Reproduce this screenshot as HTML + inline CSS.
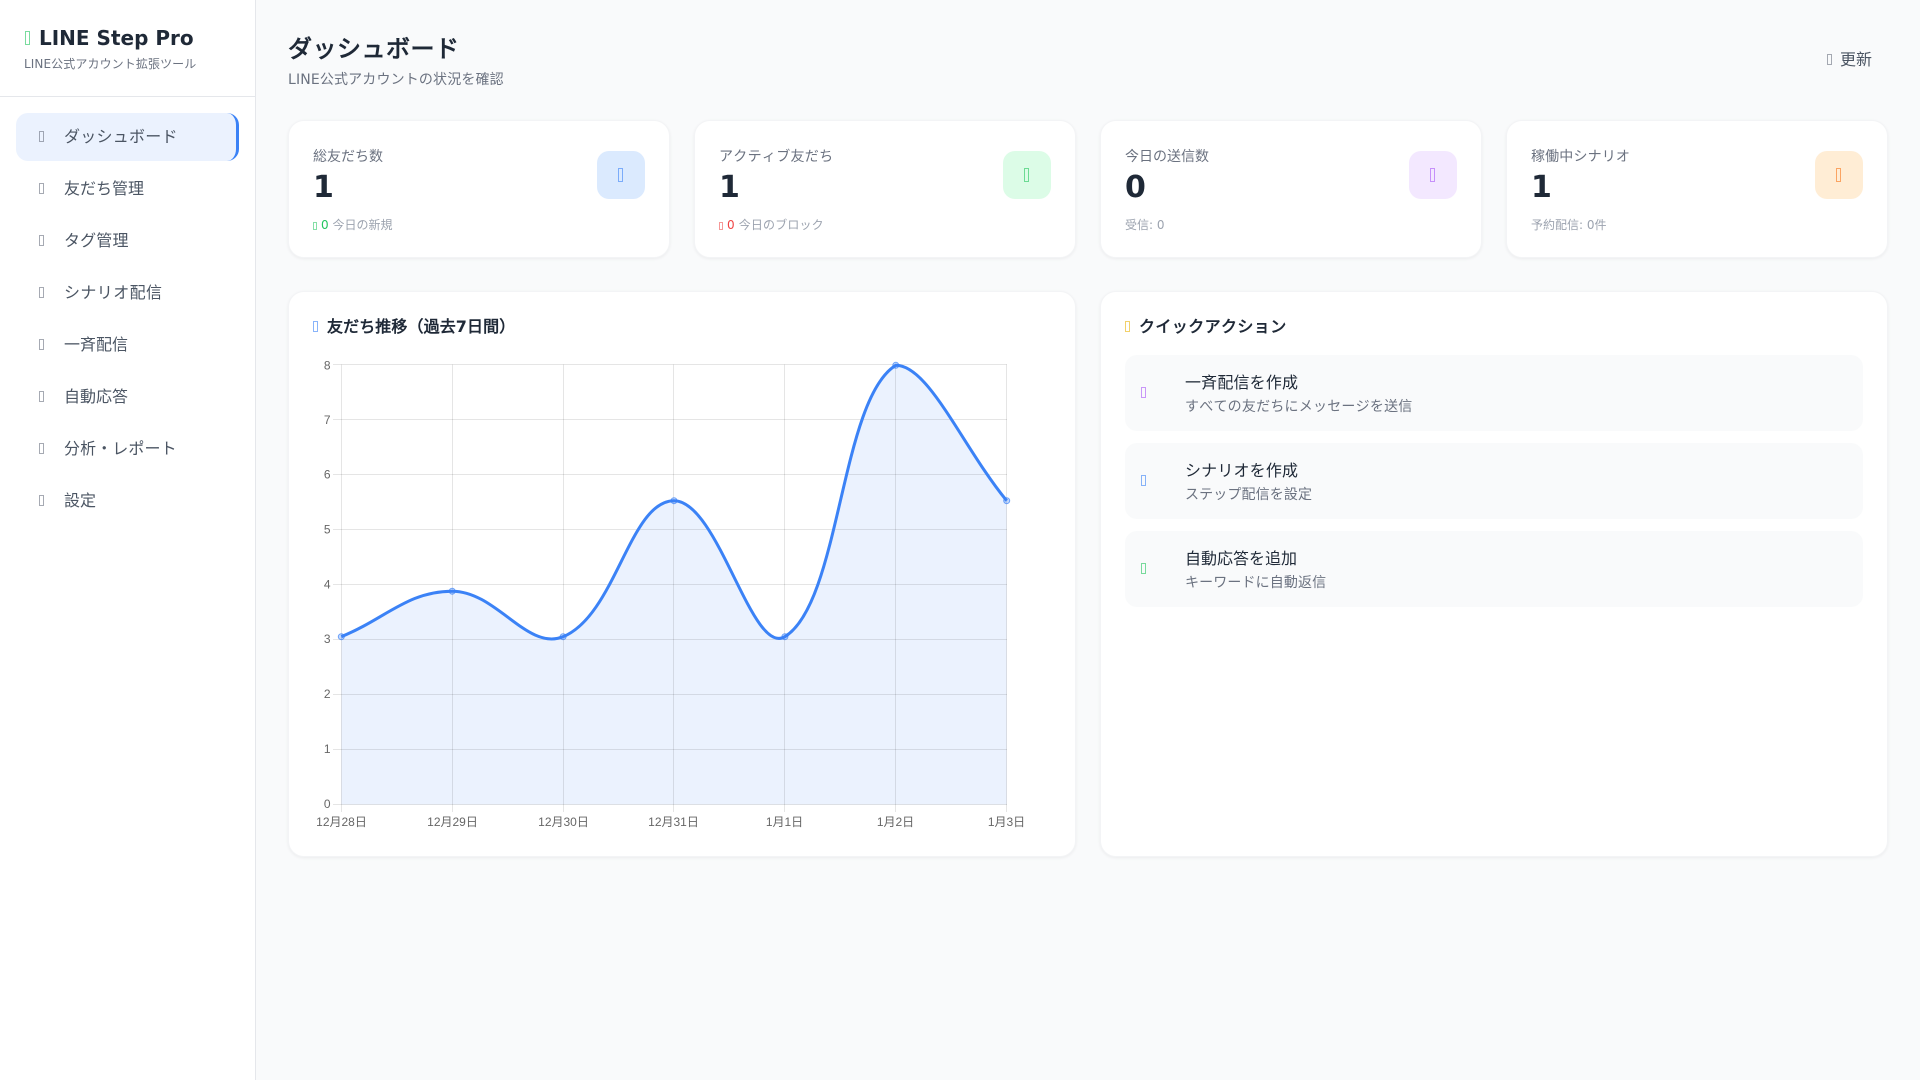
<!DOCTYPE html>
<html><head><meta charset="utf-8"><title>LINE Step Pro</title>
<style>
*{box-sizing:border-box;margin:0;padding:0}
html,body{width:1920px;height:1080px;overflow:hidden;background:#f9fafb;font-family:"DejaVu Sans",sans-serif;color:#1f2937;font-kerning:none}
.o{position:absolute;display:block;border:1px solid currentColor;opacity:.6;width:5px;height:11px}
.side{position:absolute;left:0;top:0;width:256px;height:1080px;background:#fff;border-right:1px solid #e5e7eb}
.head{position:absolute;left:0;top:0;width:255px;height:97px;border-bottom:1px solid #e5e7eb}
.logo{position:absolute;left:39px;top:24px;font-size:20px;line-height:28px;font-weight:700;color:#1f2937;white-space:nowrap}
.tag{position:absolute;left:24px;top:56px;font-size:12px;line-height:16px;color:#6b7280;white-space:nowrap;letter-spacing:.1px}
.nav{position:absolute;left:16px;width:223px;height:48px;border-radius:12px;font-size:16px;line-height:48px;color:#4b5563;white-space:nowrap}
.nav.on{background:#ebf2fe;border-right:3px solid #3b82f6}
.nav .o{left:23px;top:18px;color:#6b7280}
.nav span{position:absolute;left:48px}
h1{position:absolute;left:288px;top:33px;font-size:24px;line-height:32px;font-weight:700;color:#1f2937;white-space:nowrap;letter-spacing:.5px}
.sub{position:absolute;left:288px;top:70px;font-size:14px;line-height:20px;color:#6b7280;white-space:nowrap;letter-spacing:.15px}
.btn{position:absolute;left:1840px;top:48px;font-size:16px;line-height:24px;color:#4b5563;white-space:nowrap}
.card{position:absolute;background:#fff;border:1px solid #f3f4f6;border-radius:16px;box-shadow:0 1px 3px rgba(0,0,0,.06)}
.stat{top:120px;width:382px;height:138px}
.stat .l{position:absolute;left:24px;top:26px;font-size:14px;line-height:20px;color:#6b7280;white-space:nowrap}
.stat .v{position:absolute;left:24px;top:49px;font-size:30px;line-height:36px;font-weight:700;color:#1f2937}
.stat .s{position:absolute;left:24px;top:96px;font-size:12px;line-height:16px;color:#9ca3af;white-space:nowrap}
.stat .s b{font-weight:400}
.stat .s u{display:inline-block;width:4px;height:8px;border:1px solid currentColor;opacity:.55;margin-right:4px;text-decoration:none;vertical-align:-1px}
.stat .ic{position:absolute;right:24px;top:30px;width:48px;height:48px;border-radius:12px}
.stat .ic .o{left:21px;top:17px;height:14px}
.pt{font-size:16px;line-height:24px;font-weight:700;color:#1f2937;position:absolute;left:38px;top:23px;white-space:nowrap}
.act{position:absolute;left:24px;width:738px;height:76px;background:#f9fafb;border-radius:12px}
.act .o{left:16px;top:32px}
.act .t{position:absolute;left:60px;top:16px;font-size:16px;line-height:24px;color:#1f2937;white-space:nowrap}
.act .d{position:absolute;left:60px;top:42px;font-size:14px;line-height:20px;color:#6b7280;white-space:nowrap}
svg{position:absolute;left:0;top:0}
svg text{font-family:"Liberation Sans",sans-serif;font-size:12px;fill:#666}
</style></head><body>
<div class="side">
<div class="head"><span class="o" style="left:25px;top:31px;height:14px;color:#22c55e"></span><div class="logo">LINE Step Pro</div><div class="tag">LINE公式アカウント拡張ツール</div></div>
<div class="nav on" style="top:113px"><i class="o"></i><span style="letter-spacing:.25px">ダッシュボード</span></div>
<div class="nav" style="top:165px"><i class="o"></i><span>友だち管理</span></div>
<div class="nav" style="top:217px"><i class="o"></i><span style="letter-spacing:.15px">タグ管理</span></div>
<div class="nav" style="top:269px"><i class="o"></i><span style="letter-spacing:.4px">シナリオ配信</span></div>
<div class="nav" style="top:321px"><i class="o"></i><span>一斉配信</span></div>
<div class="nav" style="top:373px"><i class="o"></i><span>自動応答</span></div>
<div class="nav" style="top:425px"><i class="o"></i><span style="letter-spacing:.1px">分析・レポート</span></div>
<div class="nav" style="top:477px"><i class="o"></i><span>設定</span></div>
</div>
<h1>ダッシュボード</h1>
<div class="sub">LINE公式アカウントの状況を確認</div>
<span class="o" style="left:1827px;top:54px;color:#6b7280"></span>
<div class="btn">更新</div>

<div class="card stat" style="left:288px"><div class="l">総友だち数</div><div class="v">1</div><div class="s"><b style="color:#22c55e"><u></u>0</b> 今日の新規</div><div class="ic" style="background:#dbeafe;color:#3b82f6"><i class="o"></i></div></div>
<div class="card stat" style="left:694px"><div class="l" style="letter-spacing:.3px">アクティブ友だち</div><div class="v">1</div><div class="s" style="letter-spacing:.15px"><b style="color:#ef4444"><u></u>0</b> 今日のブロック</div><div class="ic" style="background:#dcfce7;color:#22c55e"><i class="o"></i></div></div>
<div class="card stat" style="left:1100px"><div class="l">今日の送信数</div><div class="v">0</div><div class="s">受信: 0</div><div class="ic" style="background:#f3e8ff;color:#a855f7"><i class="o"></i></div></div>
<div class="card stat" style="left:1506px"><div class="l" style="letter-spacing:.15px">稼働中シナリオ</div><div class="v">1</div><div class="s">予約配信: 0件</div><div class="ic" style="background:#ffedd5;color:#f97316"><i class="o"></i></div></div>

<div class="card" style="left:288px;top:291px;width:788px;height:566px"><span class="o" style="left:24px;top:29px;color:#3b82f6"></span><div class="pt" style="letter-spacing:.1px">友だち推移（過去7日間）</div></div>
<div class="card" style="left:1100px;top:291px;width:788px;height:566px">
<span class="o" style="left:24px;top:29px;color:#eab308"></span><div class="pt" style="letter-spacing:.4px">クイックアクション</div>
<div class="act" style="top:63px"><i class="o" style="color:#a855f7"></i><div class="t" style="letter-spacing:.17px">一斉配信を作成</div><div class="d" style="letter-spacing:.22px">すべての友だちにメッセージを送信</div></div>
<div class="act" style="top:151px"><i class="o" style="color:#3b82f6"></i><div class="t" style="letter-spacing:.17px">シナリオを作成</div><div class="d" style="letter-spacing:.13px">ステップ配信を設定</div></div>
<div class="act" style="top:239px"><i class="o" style="color:#22c55e"></i><div class="t">自動応答を追加</div><div class="d" style="letter-spacing:.12px">キーワードに自動返信</div></div>
</div>

<svg width="1920" height="1080" viewBox="0 0 1920 1080">
<path d="M341.3 636.7C385.66 618.5 407.84 591.2 452.2 591.2C496.56 591.2 527.1 651.39 563.1 636.7C615.82 615.19 629.64 500.7 674 500.7C718.36 500.7 751.68 656.98 784.9 636.7C840.4 602.82 840.25 399.36 895.8 365.3C928.97 365.3 962.34 446.54 1006.7 500.7L1006.7 804.5L341.3 804.5Z" fill="rgba(59,130,246,.1)"/>
<g stroke="rgba(0,0,0,.1)" stroke-width="1" fill="none">
<path d="M333 364.5H1007M333 419.5H1007M333 474.5H1007M333 529.5H1007M333 584.5H1007M333 639.5H1007M333 694.5H1007M333 749.5H1007M333 804.5H1007"/>
<path d="M341.5 364.5V812M452.5 364.5V812M563.5 364.5V812M673.5 364.5V812M784.5 364.5V812M895.5 364.5V812M1006.5 364.5V812"/>
</g>
<path d="M341.3 636.7C385.66 618.5 407.84 591.2 452.2 591.2C496.56 591.2 527.1 651.39 563.1 636.7C615.82 615.19 629.64 500.7 674 500.7C718.36 500.7 751.68 656.98 784.9 636.7C840.4 602.82 840.25 399.36 895.8 365.3C928.97 365.3 962.34 446.54 1006.7 500.7" fill="none" stroke="#3b82f6" stroke-width="3"/>
<g fill="rgba(59,130,246,.3)" stroke="#3b82f6" stroke-width="1" stroke-opacity=".7">
<circle cx="341.3" cy="636.7" r="3"/><circle cx="452.2" cy="591.2" r="3"/><circle cx="563.1" cy="636.7" r="3"/><circle cx="674" cy="500.7" r="3"/><circle cx="784.9" cy="636.7" r="3"/><circle cx="895.8" cy="365.3" r="3"/><circle cx="1006.7" cy="500.7" r="3"/>
</g>
<g text-anchor="end">
<text x="330.5" y="369.5">8</text><text x="330.5" y="424">7</text><text x="330.5" y="478.5">6</text><text x="330.5" y="533.5">5</text><text x="330.5" y="588.5">4</text><text x="330.5" y="643">3</text><text x="330.5" y="698">2</text><text x="330.5" y="753">1</text><text x="330.5" y="808">0</text>
</g>
<g text-anchor="middle">
<text x="341.5" y="826">12月28日</text><text x="452.5" y="826">12月29日</text><text x="563.5" y="826">12月30日</text><text x="673.5" y="826">12月31日</text><text x="784.5" y="826">1月1日</text><text x="895.5" y="826">1月2日</text><text x="1006.5" y="826">1月3日</text>
</g>
</svg>
</body></html>
